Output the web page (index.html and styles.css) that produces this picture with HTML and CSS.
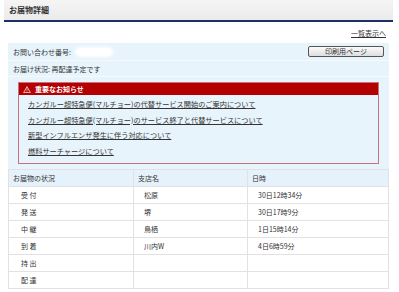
FILE: index.html
```html
<!DOCTYPE html>
<html lang="ja">
<head>
<meta charset="utf-8">
<title>お届物詳細</title>
<link rel="stylesheet" href="styles.css">
</head>
<body>
<div class="page">
  <h1 class="title">お届物詳細</h1>
  <div class="backlink"><a href="#">一覧表示へ</a></div>
  <div class="info">
    <div class="info-row row-number">
      <span class="label">お問い合わせ番号:</span>
      <span class="blur"></span>
      <button class="print">印刷用ページ</button>
    </div>
    <div class="info-row row-status">お届け状況: 再配達予定です</div>
    <div class="notice">
      <div class="notice-head">
        <svg class="warn" viewBox="0 0 10 9" width="8" height="7"><path d="M5 0.8 L9.3 8.4 L0.7 8.4 Z" fill="none" stroke="#fff" stroke-width="0.9" stroke-linejoin="round"/><path d="M5 3.3 V6" stroke="#fff" stroke-width="0.9"/><circle cx="5" cy="7.2" r="0.5" fill="#fff"/></svg>
        <span>重要なお知らせ</span>
      </div>
      <ul class="notice-list">
        <li><a href="#">カンガルー超特急便(マルチョー)の代替サービス開始のご案内について</a></li>
        <li><a href="#">カンガルー超特急便(マルチョー)のサービス終了と代替サービスについて</a></li>
        <li><a href="#">新型インフルエンザ発生に伴う対応について</a></li>
        <li><a href="#">燃料サーチャージについて</a></li>
      </ul>
    </div>
  </div>
  <table class="status">
    <thead>
      <tr><th class="c1">お届物の状況</th><th class="c2">支店名</th><th class="c3">日時</th></tr>
    </thead>
    <tbody>
      <tr><td class="step">受 付</td><td>松原</td><td>30日12時34分</td></tr>
      <tr><td class="step">発 送</td><td>堺</td><td>30日17時9分</td></tr>
      <tr><td class="step">中 継</td><td>鳥栖</td><td>1日15時14分</td></tr>
      <tr><td class="step">到 着</td><td>川内W</td><td>4日6時59分</td></tr>
      <tr><td class="step">持 出</td><td></td><td></td></tr>
      <tr><td class="step">配 達</td><td></td><td></td></tr>
    </tbody>
  </table>
</div>
</body>
</html>
```

FILE: styles.css
```css
html, body {
  margin: 0;
  padding: 0;
  background: #fff;
}
body {
  font-family: "Noto Sans CJK JP", "Noto Sans", sans-serif;
  font-size: 7px;
  color: #333;
}
.page {
  width: 399px;
}
.title {
  margin: 0 6px 0 4px;
  box-sizing: border-box;
  padding: 0 0 0 5px;
  font-size: 8px;
  font-weight: bold;
  line-height: 20px;
  color: #333;
  background: linear-gradient(#f5f5f5, #ebebeb);
  border-bottom: 2px solid #1d2f66;
  height: 22px;
}
.backlink {
  height: 21px;
  display: flex;
  align-items: center;
  justify-content: flex-end;
  padding-right: 13px;
}
.backlink a {
  color: #333;
  text-decoration: underline;
}
.info {
  margin-left: 8px;
  width: 381px;
  background: #e8f4fc;
  padding-bottom: 5px;
}
.info-row {
  display: flex;
  align-items: center;
  padding-left: 5px;
  border-bottom: 1px solid #f3f9fd;
}
.row-number {
  height: 17px;
}
.row-status {
  height: 15px;
}
.blur {
  display: inline-block;
  width: 38px;
  height: 10px;
  margin-left: 4px;
  background: #fff;
  border-radius: 5px;
  filter: blur(1.5px);
}
.print {
  margin-left: auto;
  margin-right: 5px;
  width: 76px;
  height: 11px;
  padding: 0;
  font-family: inherit;
  font-size: 7px;
  line-height: 9px;
  color: #333;
  border: 1px solid #555;
  border-radius: 2px;
  background: linear-gradient(#fbfbfb, #dedede);
}
.notice {
  margin: 5px 10px 0 10px;
  border: 1px solid #c7727c;
}
.notice-head {
  height: 12px;
  background: #b40000;
  color: #fff;
  display: flex;
  align-items: center;
  padding-left: 4px;
  gap: 4px;
  font-weight: bold;
}
.warn {
  display: block;
}
.notice-list {
  list-style: none;
  margin: 0;
  padding: 2px 0 4px 9px;
  font-size: 7.2px;
}
.notice-list li {
  line-height: 15.5px;
}
.notice-list a {
  color: #333;
  text-decoration: underline;
}
.status {
  margin-left: 8px;
  width: 381px;
  border-collapse: collapse;
  table-layout: fixed;
}
.status th, .status td {
  border: 1px solid #e2e2e2;
  text-align: left;
  font-weight: normal;
  height: 16px;
  padding: 0 0 0 10px;
}
.status th {
  background: #e6f2fb;
  padding-left: 4px;
}
.status td.step {
  padding-left: 12px;
}
.c1 { width: 120px; }
.c2 { width: 109px; }
```
